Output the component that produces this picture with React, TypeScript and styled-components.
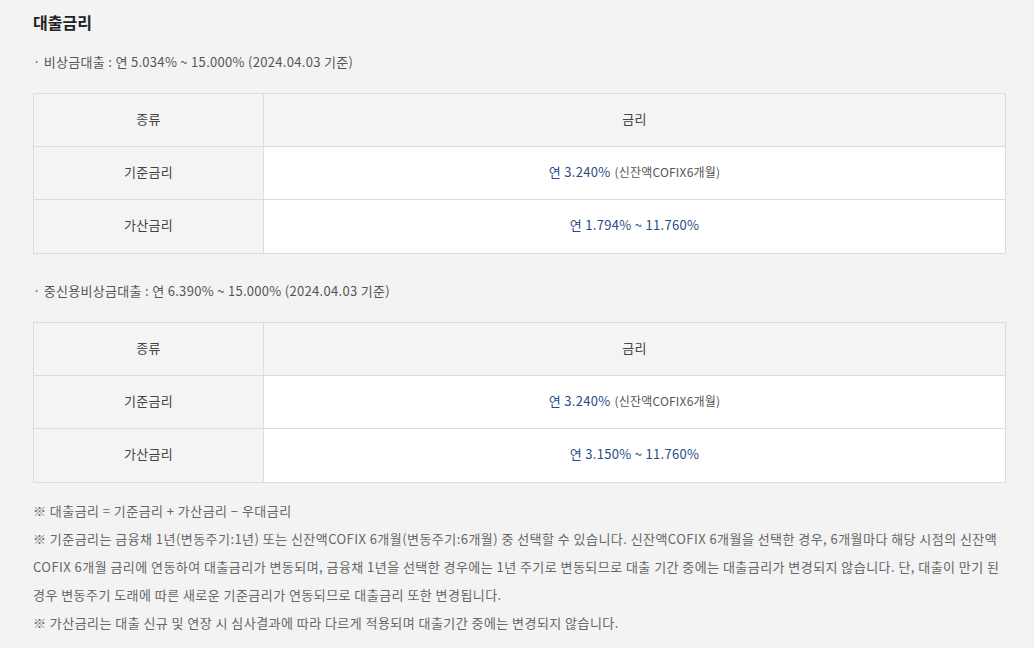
import React from "react";
import styled, { createGlobalStyle } from "styled-components";

const Global = createGlobalStyle`
  html, body { margin: 0; padding: 0; background: #f3f3f3; }
  body { font-family: "Noto Sans CJK KR", "Noto Sans", sans-serif; }
`;

const Page = styled.div`
  padding: 10px 28px 0 33px;
  color: #555;
`;

const Title = styled.h2`
  margin: 0;
  font-size: 16px;
  font-weight: 700;
  color: #222;
  line-height: 24px;
`;

const Bullet = styled.p<{ $top: number }>`
  margin: ${(p) => p.$top}px 0 0 0;
  font-size: 13px;
  line-height: 20px;
  color: #555;
  letter-spacing: 0.3px;
`;

const Table = styled.div`
  margin-top: 21px;
  display: grid;
  grid-template-columns: 230px 1fr;
  border: 1px solid #dcdcdc;
`;

const Cell = styled.div<{ $head?: boolean; $white?: boolean; $last?: boolean }>`
  box-sizing: border-box;
  height: ${(p) => (p.$last ? 53 : 53)}px;
  padding-bottom: 4px;
  display: flex;
  align-items: center;
  justify-content: center;
  font-size: 13px;
  color: #444;
  background: ${(p) => (p.$white ? "#fff" : "#f4f4f4")};
  border-bottom: ${(p) => (p.$last ? "none" : "1px solid #dcdcdc")};
  letter-spacing: 0.3px;
`;

const KindCell = styled(Cell)`
  border-right: 1px solid #dcdcdc;
`;

const Rate = styled.span`
  color: #2b4a86;
`;

const Sub = styled.span`
  color: #555;
  font-size: 12px;
  margin-left: 4px;
  letter-spacing: 0.2px;
`;

const Notes = styled.div`
  margin-top: 14px;
  font-size: 13px;
  line-height: 28px;
  color: #666;
  letter-spacing: 0.45px;
`;

const Note = styled.p`
  margin: 0;
`;

type Row = { kind: string; rate: string; sub?: string };

const RateTable = ({ rows }: { rows: Row[] }) => (
  <Table>
    <KindCell $head>종류</KindCell>
    <Cell $head>금리</Cell>
    {rows.map((r, i) => (
      <React.Fragment key={r.kind}>
        <KindCell $last={i === rows.length - 1}>{r.kind}</KindCell>
        <Cell $white $last={i === rows.length - 1}>
          <Rate>{r.rate}</Rate>
          {r.sub && <Sub>{r.sub}</Sub>}
        </Cell>
      </React.Fragment>
    ))}
  </Table>
);

export default function App() {
  return (
    <>
      <Global />
      <Page>
        <Title>대출금리</Title>
        <Bullet $top={18}>· 비상금대출 : 연 5.034% ~ 15.000% (2024.04.03 기준)</Bullet>
        <RateTable
          rows={[
            { kind: "기준금리", rate: "연 3.240%", sub: "(신잔액COFIX6개월)" },
            { kind: "가산금리", rate: "연 1.794% ~ 11.760%" },
          ]}
        />
        <Bullet $top={27}>· 중신용비상금대출 : 연 6.390% ~ 15.000% (2024.04.03 기준)</Bullet>
        <RateTable
          rows={[
            { kind: "기준금리", rate: "연 3.240%", sub: "(신잔액COFIX6개월)" },
            { kind: "가산금리", rate: "연 3.150% ~ 11.760%" },
          ]}
        />
        <Notes>
          <Note>※ 대출금리 = 기준금리 + 가산금리 − 우대금리</Note>
          <Note>
            ※ 기준금리는 금융채 1년(변동주기:1년) 또는 신잔액COFIX 6개월(변동주기:6개월) 중 선택할 수 있습니다. 신잔액COFIX 6개월을 선택한 경우, 6개월마다 해당 시점의 신잔액
            <br />
            COFIX 6개월 금리에 연동하여 대출금리가 변동되며, 금융채 1년을 선택한 경우에는 1년 주기로 변동되므로 대출 기간 중에는 대출금리가 변경되지 않습니다. 단, 대출이 만기 된
            <br />
            경우 변동주기 도래에 따른 새로운 기준금리가 연동되므로 대출금리 또한 변경됩니다.
          </Note>
          <Note>※ 가산금리는 대출 신규 및 연장 시 심사결과에 따라 다르게 적용되며 대출기간 중에는 변경되지 않습니다.</Note>
        </Notes>
      </Page>
    </>
  );
}
